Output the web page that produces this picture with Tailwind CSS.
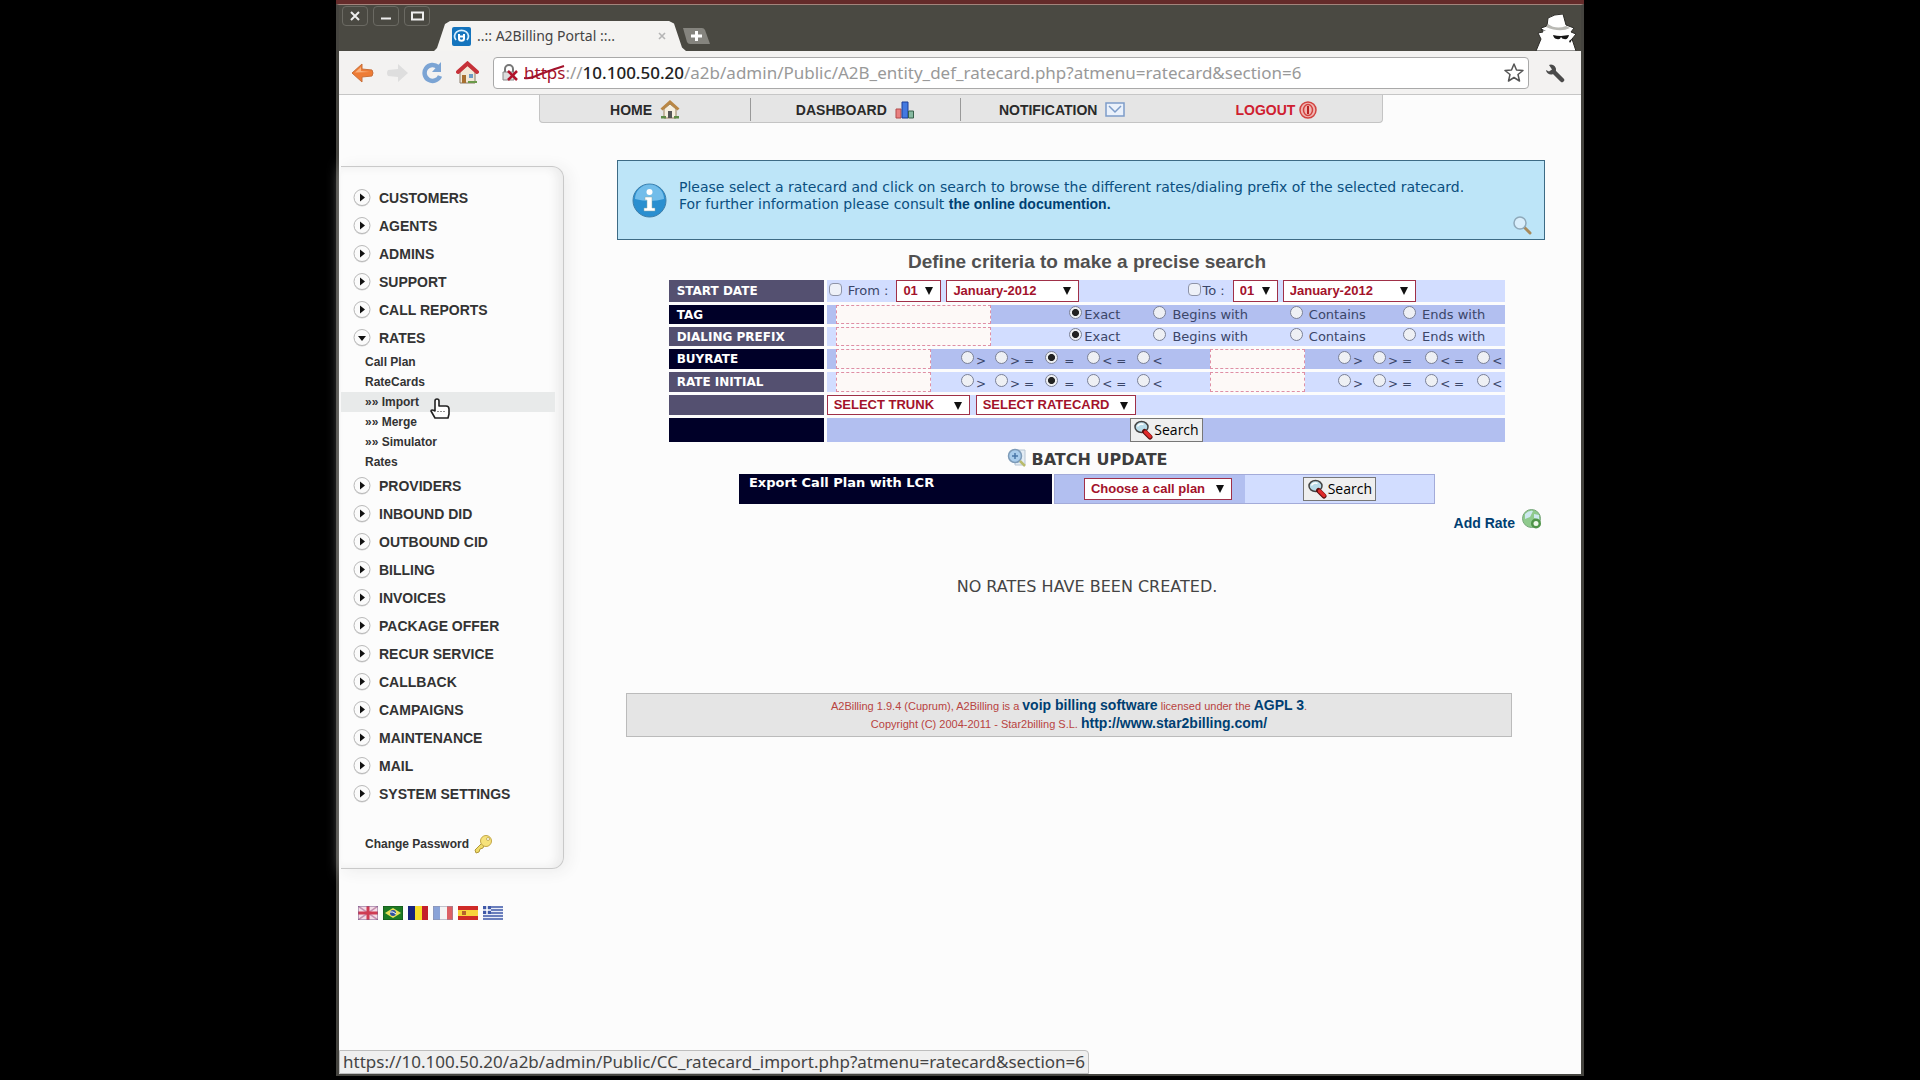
<!DOCTYPE html>
<html lang="en">
  <head>
    <meta charset="UTF-8" />
    <meta name="viewport" content="width=device-width, initial-scale=1" />
    <title>..:: A2Billing Portal ::..</title>
    <script src="https://cdn.jsdelivr.net/npm/@tailwindcss/browser@4"></script>
  </head>
  <body class="bg-black">
    <!-- Shared icons -->
    <svg class="hidden">
      <symbol id="arrow-right" viewBox="0 0 18 18">
        <circle cx="9" cy="9.500" r="8" fill="#d2d2d2" />
        <circle cx="9" cy="8.500" r="8" fill="#fbfbfb" stroke="#b9b9b9" stroke-width="1" />
        <path d="M7 4.500 12 8.500 7 12.500z" fill="#111" />
      </symbol>
      <symbol id="arrow-down" viewBox="0 0 18 18">
        <circle cx="9" cy="9.500" r="8" fill="#d2d2d2" />
        <circle cx="9" cy="8.500" r="8" fill="#fbfbfb" stroke="#b9b9b9" stroke-width="1" />
        <path d="M5 7h8l-4 5z" fill="#111" />
      </symbol>
      <symbol id="caret" viewBox="0 0 8 9">
        <path d="M0 1h8L4 9z" fill="#111" />
      </symbol>
      <symbol id="search" viewBox="0 0 20 20">
        <ellipse cx="8.500" cy="7" rx="6.500" ry="5.500" fill="#b9dcea" stroke="#444" stroke-width="1.500" />
        <path d="M4.500 6.500c1-2.500 4-3 6-2" stroke="#fff" stroke-width="1.500" fill="none" />
        <path d="m11.500 11.500 5.500 5.500" stroke="#5a1010" stroke-width="5" stroke-linecap="round" />
        <path d="m12.500 12 4.500 4.500" stroke="#e02a2a" stroke-width="3.500" stroke-linecap="round" />
      </symbol>
    </svg>

    <div
      class="mx-auto flex min-h-screen w-[65%] flex-col border-t-4 border-[#642b2a] pb-1 font-['Liberation_Sans',sans-serif]"
    >
      <div class="flex grow flex-col border-x-[3px] border-t border-b-2 border-x-[#45443f] border-t-[#a3847c] border-b-[#45443f]">
        <!-- Title bar -->
        <header class="flex h-[46px] items-end justify-between bg-[#4a4942] pr-1">
          <div class="flex h-full items-start">
            <div class="flex gap-[5px] pt-px pr-1 pl-[3px]">
              <button aria-label="Close" class="flex h-5 w-[26px] items-center justify-center rounded-sm border border-[#6b6a63]">
                <svg class="size-3" viewBox="0 0 12 12"><path d="m2 2 8 8M10 2 2 10" stroke="#eee" stroke-width="2" /></svg>
              </button>
              <button aria-label="Minimize" class="flex h-5 w-[26px] items-center justify-center rounded-sm border border-[#6b6a63]">
                <svg class="size-3" viewBox="0 0 12 12"><path d="M1 8.500h10" stroke="#eee" stroke-width="2" /></svg>
              </button>
              <button aria-label="Maximize" class="flex h-5 w-[26px] items-center justify-center rounded-sm border border-[#6b6a63]">
                <svg class="h-[10px] w-[13px]" viewBox="0 0 13 10"><path d="M1 1.500h11v7H1z" fill="none" stroke="#eee" stroke-width="2" /></svg>
              </button>
            </div>
            <div
              class="mt-4 flex h-[30px] w-[252px] items-center bg-[#f4f3f1] pl-[18px] font-['Noto_Sans',sans-serif] text-sm text-[#444] [clip-path:polygon(0_100%,3px_90%,11px_10%,16px_0,235px_0,240px_8%,248px_88%,100%_100%)]"
            >
              <svg class="mr-[6px] size-[19px]" viewBox="0 0 19 19">
                <rect width="19" height="19" rx="2" fill="#1474bd" />
                <path d="M4 13a7 6 0 1 1 11 0" fill="none" stroke="#d7efff" stroke-width="1.800" />
                <path d="M7 7v4.500c0 3 5 3 5 0V7M7 9.500h5" fill="none" stroke="#fff" stroke-width="2" />
              </svg>
              <span class="grow">..:: A2Billing Portal ::..</span>
              <button aria-label="Close tab" class="mr-5">
                <svg class="size-2" viewBox="0 0 8 8"><path d="m1 1 6 6M7 1 1 7" stroke="#b5b5b5" stroke-width="1.600" /></svg>
              </button>
            </div>
            <button aria-label="New tab" class="mt-[22px] -ml-1">
              <svg class="h-[18px] w-7" viewBox="0 0 28 18">
                <path d="M1 1h19q2 0 3 2l5 14H8q-2 0-3-2z" fill="#85847e" />
                <path d="M9 9h11M14.500 4v10" stroke="#fff" stroke-width="3" />
              </svg>
            </button>
          </div>
          <svg class="h-[37px] w-[42px]" viewBox="0 0 42 37">
            <path d="M1 37 6 25 3 19l5-1-2-4 6-2 1-8q6-4 15-4l3 11 8 3-3 4 5 2-4 5 4 12z" fill="#fff" stroke="#2d2c28" />
            <path d="M13 10q8 6 18 2l4 2q-10 5-24-1z" fill="#b9b9b4" />
            <path d="M18 21q4 1 8 1l8-1q-1 5-5 4-2 0-3-2-1 3-4 2-3 0-4-4M7 15l4 2-5-1zM34 27l4-3-3 5z" fill="#151515" />
          </svg>
        </header>

        <!-- Toolbar -->
        <div class="flex h-[44px] items-center border-b border-[#c6c6c6] bg-[#f3f2f1] pr-4 pl-3">
          <button aria-label="Back" class="mr-3">
            <svg class="h-5 w-[23px]" viewBox="0 0 23 20">
              <path d="M1 10 11 1v5l10 1q2 3 0 6l-10 1v5z" fill="#ee7c35" stroke="#c9703a" />
              <path d="M4 9.500 10 4v4l9 1z" fill="#f9b27f" />
            </svg>
          </button>
          <button aria-label="Forward" class="mr-3">
            <svg class="h-5 w-[23px]" viewBox="0 0 23 20">
              <path d="M22 10 12 1v5L2 7q-2 3 0 6l10 1v5z" fill="#dedede" />
            </svg>
          </button>
          <button aria-label="Reload" class="mr-3">
            <svg class="h-[22px] w-[23px]" viewBox="0 0 23 22">
              <path d="M17 5a8 8 0 1 0 2 9" fill="none" stroke="#7ba4d4" stroke-width="4.500" />
              <path d="M20 0v10h-9z" fill="#7ba4d4" />
            </svg>
          </button>
          <button aria-label="Home" class="mr-[14px]">
            <svg class="h-6 w-[23px]" viewBox="0 0 23 24">
              <path d="M4 11 11.500 4 19 11v11H4z" fill="#f2e9d8" stroke="#8b7b66" />
              <path d="M2 11 11.500 2.500 21 11" fill="none" stroke="#c63139" stroke-width="4" stroke-linecap="round" />
              <path d="M6 14h4v8H6z" fill="#a8702f" />
              <path d="M13 13h4v4h-4z" fill="#6d9bc4" />
              <path d="M12 20h9v2h-9z" fill="#6a9a4a" />
            </svg>
          </button>
          <div class="flex h-8 grow items-center rounded border border-[#a9a9a9] bg-white pr-1 pl-2">
            <svg class="mr-[6px] h-[18px] w-4" viewBox="0 0 16 18">
              <path d="M3 8V5a4 4 0 0 1 8 0v3" fill="none" stroke="#777" stroke-width="2" />
              <path d="M1 8h11v8H1z" fill="#ddd" stroke="#888" />
              <path d="m6 7 9 9M15 7l-9 9" stroke="#b1122b" stroke-width="2.500" />
            </svg>
            <div class="grow font-['Noto_Sans',sans-serif] text-[17px] leading-6 whitespace-nowrap text-[#999]">
              <span class="relative text-[#a3122b]">https<svg class="absolute top-1 left-0 h-4 w-[42px]" viewBox="0 0 42 16"><path d="M0 13Q6 14 12 11T40 1" fill="none" stroke="#a3122b" stroke-width="2" /></svg></span>://<span class="font-medium text-[#222]">10.100.50.20</span>/a2b/admin/Public/A2B_entity_def_ratecard.php?atmenu=ratecard&amp;section=6
            </div>
            <button aria-label="Bookmark this page">
              <svg class="size-5" viewBox="0 0 20 20"><path d="m10 1 2.500 6 6.500.500-5 4 1.500 6.500-5.500-3.500L4.500 18 6 11.500l-5-4L7.500 7z" fill="#fff" stroke="#555" stroke-width="1.500" stroke-linejoin="round" /></svg>
            </button>
          </div>
          <button aria-label="Settings" class="ml-4">
            <svg class="size-5" viewBox="0 0 20 20">
              <path d="m9 9 8 8" stroke="#4b4b4b" stroke-width="4.500" stroke-linecap="round" />
              <path d="M4 2a5 5 0 1 1-3 5l3 1.500 3-2z" fill="#4b4b4b" />
            </svg>
          </button>
        </div>

        <!-- Page -->
        <div class="relative flex grow flex-col bg-[#fcfcfc] pl-[2px]">
          <nav class="mx-auto grid h-7 w-[68%] grid-cols-4 rounded-b-sm border border-t-0 border-[#c4c4c4] bg-[#e5e5e5] pt-[3px] pb-px text-sm font-bold text-[#2a2a2a]">
            <a href="#" class="flex items-center justify-center gap-2 border-r border-[#999]">HOME
              <svg class="size-5" viewBox="0 0 20 20">
                <path d="M4 9 10 4l6 5v9H4z" fill="#f6efdf" stroke="#9b8360" />
                <path d="M1.500 9.500 10 2l8.500 7.500" fill="none" stroke="#b98644" stroke-width="3" />
                <path d="M8 11h4v7H8z" fill="#555" />
                <path d="M1 16h5v2.500H1zM14 16h5v2.500h-5z" fill="#5d8a45" />
              </svg>
            </a>
            <a href="#" class="flex items-center justify-center gap-2 border-r border-[#999]">DASHBOARD
              <svg class="size-5" viewBox="0 0 20 20">
                <path d="M1 9h5v9H1z" fill="#e88080" stroke="#b14a4a" />
                <path d="M7 2h6v16H7z" fill="#4379e0" stroke="#1c3f99" />
                <path d="M13.500 11h5v7h-5z" fill="#86b9a0" stroke="#37604a" />
              </svg>
            </a>
            <a href="#" class="flex items-center justify-center gap-2 pr-2">NOTIFICATION
              <svg class="h-4 w-5" viewBox="0 0 20 16">
                <path d="M1 1h18v13H1z" fill="#eaf1fb" stroke="#7d9cc9" stroke-width="1.500" />
                <path d="m4 4 6 6 6-6" fill="none" stroke="#7d9cc9" stroke-width="1.500" />
              </svg>
            </a>
            <a href="#" class="flex items-center justify-center gap-1 text-[#cf2030]">LOGOUT
              <svg class="size-[18px]" viewBox="0 0 18 18">
                <circle cx="9" cy="9" r="8" fill="#f0b6b2" stroke="#d2423f" stroke-width="1.500" />
                <ellipse cx="9" cy="9" rx="4.500" ry="5.500" fill="none" stroke="#d2423f" stroke-width="1.500" />
                <path d="M9 5v8" stroke="#b92222" stroke-width="2" />
              </svg>
            </a>
          </nav>

          <div class="flex grow">
            <!-- Side menu -->
            <aside class="w-[223px] shrink-0 pt-[43px]">
              <div class="relative h-[703px] rounded-r-xl border border-l-0 border-[#c9c9c9] pt-[17px] text-[#333] shadow-[inset_-6px_0_10px_#ececec,4px_2px_16px_#ececec]">
                <ul class="text-sm font-bold">
                  <li><a href="#" class="flex h-7 items-center gap-2 pl-3"><svg class="size-[18px]"><use href="#arrow-right" /></svg>CUSTOMERS</a></li>
                  <li><a href="#" class="flex h-7 items-center gap-2 pl-3"><svg class="size-[18px]"><use href="#arrow-right" /></svg>AGENTS</a></li>
                  <li><a href="#" class="flex h-7 items-center gap-2 pl-3"><svg class="size-[18px]"><use href="#arrow-right" /></svg>ADMINS</a></li>
                  <li><a href="#" class="flex h-7 items-center gap-2 pl-3"><svg class="size-[18px]"><use href="#arrow-right" /></svg>SUPPORT</a></li>
                  <li><a href="#" class="flex h-7 items-center gap-2 pl-3"><svg class="size-[18px]"><use href="#arrow-right" /></svg>CALL REPORTS</a></li>
                  <li>
                    <a href="#" class="flex h-7 items-center gap-2 pl-3"><svg class="size-[18px]"><use href="#arrow-down" /></svg>RATES</a>
                    <ul class="text-xs leading-5">
                      <li><a href="#" class="block pl-6">Call Plan</a></li>
                      <li><a href="#" class="block pl-6">RateCards</a></li>
                      <li class="relative mr-2 bg-[#e8eaea]">
                        <a href="#" class="block pl-6">»» Import</a>
                        <!-- Mouse pointer -->
                        <svg class="absolute top-[6px] left-[89px] h-[21px] w-5" viewBox="0 0 20 21">
                          <path d="M5 12V3q0-2 2-2t2 2v5h7q3 0 3 3v5l-1 4H5l-4-7q0-2 4 0z" fill="#fff" stroke="#222" stroke-width="1.600" stroke-linejoin="round" />
                          <path d="M8 13v1M11 13v1M14 13v1" stroke="#222" />
                        </svg>
                      </li>
                      <li><a href="#" class="block pl-6">»» Merge</a></li>
                      <li><a href="#" class="block pl-6">»» Simulator</a></li>
                      <li><a href="#" class="block pl-6">Rates</a></li>
                    </ul>
                  </li>
                  <li><a href="#" class="flex h-7 items-center gap-2 pl-3"><svg class="size-[18px]"><use href="#arrow-right" /></svg>PROVIDERS</a></li>
                  <li><a href="#" class="flex h-7 items-center gap-2 pl-3"><svg class="size-[18px]"><use href="#arrow-right" /></svg>INBOUND DID</a></li>
                  <li><a href="#" class="flex h-7 items-center gap-2 pl-3"><svg class="size-[18px]"><use href="#arrow-right" /></svg>OUTBOUND CID</a></li>
                  <li><a href="#" class="flex h-7 items-center gap-2 pl-3"><svg class="size-[18px]"><use href="#arrow-right" /></svg>BILLING</a></li>
                  <li><a href="#" class="flex h-7 items-center gap-2 pl-3"><svg class="size-[18px]"><use href="#arrow-right" /></svg>INVOICES</a></li>
                  <li><a href="#" class="flex h-7 items-center gap-2 pl-3"><svg class="size-[18px]"><use href="#arrow-right" /></svg>PACKAGE OFFER</a></li>
                  <li><a href="#" class="flex h-7 items-center gap-2 pl-3"><svg class="size-[18px]"><use href="#arrow-right" /></svg>RECUR SERVICE</a></li>
                  <li><a href="#" class="flex h-7 items-center gap-2 pl-3"><svg class="size-[18px]"><use href="#arrow-right" /></svg>CALLBACK</a></li>
                  <li><a href="#" class="flex h-7 items-center gap-2 pl-3"><svg class="size-[18px]"><use href="#arrow-right" /></svg>CAMPAIGNS</a></li>
                  <li><a href="#" class="flex h-7 items-center gap-2 pl-3"><svg class="size-[18px]"><use href="#arrow-right" /></svg>MAINTENANCE</a></li>
                  <li><a href="#" class="flex h-7 items-center gap-2 pl-3"><svg class="size-[18px]"><use href="#arrow-right" /></svg>MAIL</a></li>
                  <li><a href="#" class="flex h-7 items-center gap-2 pl-3"><svg class="size-[18px]"><use href="#arrow-right" /></svg>SYSTEM SETTINGS</a></li>
                </ul>
                <a href="#" class="mt-[26px] flex items-center gap-1 pl-6 text-xs font-bold">Change Password
                  <svg class="size-5" viewBox="0 0 20 20">
                    <path d="M9 9 2 16l1 3 3-1 1-3 3-1 1-3z" fill="#f0dc6a" stroke="#b2983a" />
                    <circle cx="13" cy="7" r="5.500" fill="#f6e27a" stroke="#c3a748" />
                    <circle cx="15" cy="5" r="1.500" fill="#fff" stroke="#b2983a" stroke-width=".7" />
                  </svg>
                </a>
              </div>

              <!-- Languages -->
              <div class="mt-[37px] flex gap-[5px] pl-[17px]">
                <a href="#" aria-label="English"><svg class="h-[14px] w-5" viewBox="0 0 20 14"><path fill="#f3dbe5" d="M0 0h20v14H0z" /><path d="m0 0 20 14M20 0 0 14" stroke="#c58fae" stroke-width="1.500" /><path d="M10 0v14M0 7h20" stroke="#cf3b52" stroke-width="3" /><path d="M0 0h20v14H0z" fill="none" stroke="#7b5a8c" /></svg></a>
                <a href="#" aria-label="Portuguese"><svg class="h-[14px] w-5" viewBox="0 0 20 14"><path fill="#1d7a24" d="M0 0h20v14H0z" /><path d="m10 2 8 5-8 5-8-5z" fill="#e8e05a" /><circle cx="10" cy="7" r="3" fill="#2d4fa0" /><path d="M7 6q3-1 6 2" stroke="#fff" fill="none" /><path d="M0 0h20v14H0z" fill="none" stroke="#134c18" /></svg></a>
                <a href="#" aria-label="Romanian"><svg class="h-[14px] w-5" viewBox="0 0 20 14"><path fill="#17237d" d="M0 0h7v14H0z" /><path fill="#f7dc2a" d="M7 0h7v14H7z" /><path fill="#c41f2c" d="M14 0h6v14h-6z" /></svg></a>
                <a href="#" aria-label="French"><svg class="h-[14px] w-5" viewBox="0 0 20 14"><path fill="#8aa3d8" d="M0 0h7v14H0z" /><path fill="#f4f4f4" d="M7 0h7v14H7z" /><path fill="#dc6064" d="M14 0h6v14h-6z" /><path d="M0 0h20v14H0z" fill="none" stroke="#8d8fa5" /></svg></a>
                <a href="#" aria-label="Spanish"><svg class="h-[14px] w-5" viewBox="0 0 20 14"><path fill="#cf2a27" d="M0 0h20v14H0z" /><path fill="#f8d43c" d="M0 4h20v6H0z" /><path fill="#b5622b" d="M4 5h4v4H4z" /></svg></a>
                <a href="#" aria-label="Greek"><svg class="h-[14px] w-5" viewBox="0 0 20 14"><path fill="#e9edf8" d="M0 0h20v14H0z" /><path d="M0 1h20M8 4h12M8 7h12M0 10h20M0 13h20" stroke="#4059a8" stroke-width="1.500" /><path fill="#4059a8" d="M0 0h8v8H0z" /><path d="M4 0v8M0 4h8" stroke="#fff" stroke-width="1.500" /></svg></a>
              </div>
            </aside>

            <main class="grow pt-[37px] pr-9 pl-[53px]">
              <section class="relative flex h-20 items-center border border-[#3d6b85] bg-[#bde5f8] pl-[14px] font-['DejaVu_Sans',sans-serif] text-sm leading-[17px] text-[#0a4f80]">
                <svg class="mr-3 size-[35px] shrink-0" viewBox="0 0 35 35">
                  <circle cx="17.500" cy="17.500" r="16.500" fill="#2a8fd0" stroke="#3f7ea8" />
                  <path d="M3 16a14.500 14.500 0 0 1 29 0q-14 4-29 0" fill="#72bdea" />
                  <circle cx="17.500" cy="9" r="3" fill="#fff" />
                  <path d="M13 14h7v11h3v3H12v-3h3v-8h-2z" fill="#fff" stroke="#8aa" stroke-width=".5" />
                </svg>
                <p class="mb-2">
                  Please select a ratecard and click on search to browse the different rates/dialing prefix of the selected ratecard.<br />
                  For further information please consult <a href="#" class="font-['Liberation_Sans',sans-serif] text-sm leading-4 font-bold text-[#003f72]">the online documention.</a>
                </p>
                <svg class="absolute right-3 bottom-1 size-5" viewBox="0 0 20 20">
                  <path d="m12 12 6 6" stroke="#a88a5b" stroke-width="3" stroke-linecap="round" />
                  <circle cx="8" cy="8" r="6" fill="#d9eefb" stroke="#8fa9ba" stroke-width="1.500" />
                </svg>
              </section>

              <div class="pl-3">
                <h2 class="mt-[10px] mb-[3px] text-center text-[19px] leading-6 font-bold text-[#505050]">Define criteria to make a precise search</h2>

                <form>
                  <table class="mx-auto w-[92%] table-fixed border-separate border-spacing-[3px] font-['DejaVu_Sans',sans-serif] text-[13px] leading-4 text-[#3b4669]">
                    <colgroup><col class="w-[155px]" /><col /></colgroup>
                    <tr>
                      <th class="h-[22px] bg-[#545070] p-0 pl-2 text-left text-xs font-bold text-white">START DATE</th>
                      <td class="bg-[#d2ddff] p-0">
                        <div class="grid h-[22px] grid-cols-[360fr_317fr]">
                          <div class="flex items-center gap-[5px] pl-[2px]">
                            <label class="mr-[3px] flex items-center gap-[6px]"><input type="checkbox" class="mb-1 size-[13px] appearance-none rounded-sm border border-[#8d93a8] bg-[#eef1f8] checked:bg-[#445]" />From :</label>
                            <div class="relative"><select aria-label="From day" class="h-[22px] w-[45px] appearance-none border border-[#a03048] bg-white pl-[6px] font-['Liberation_Sans',sans-serif] text-[13px] font-bold text-[#a3122b]"><option>01</option></select><svg class="pointer-events-none absolute top-[6px] right-2 h-[9px] w-2"><use href="#caret" /></svg></div>
                            <div class="relative"><select aria-label="From month" class="h-[22px] w-[133px] appearance-none border border-[#a03048] bg-white pl-[6px] font-['Liberation_Sans',sans-serif] text-[13px] font-bold text-[#a3122b]"><option>January-2012</option></select><svg class="pointer-events-none absolute top-[6px] right-2 h-[9px] w-2"><use href="#caret" /></svg></div>
                          </div>
                          <div class="flex items-center gap-[5px]">
                            <label class="mr-[3px] flex items-center gap-[2px]"><input type="checkbox" class="mb-1 size-[13px] appearance-none rounded-sm border border-[#8d93a8] bg-[#eef1f8] checked:bg-[#445]" />To :</label>
                            <div class="relative"><select aria-label="To day" class="h-[22px] w-[45px] appearance-none border border-[#a03048] bg-white pl-[6px] font-['Liberation_Sans',sans-serif] text-[13px] font-bold text-[#a3122b]"><option>01</option></select><svg class="pointer-events-none absolute top-[6px] right-2 h-[9px] w-2"><use href="#caret" /></svg></div>
                            <div class="relative"><select aria-label="To month" class="h-[22px] w-[133px] appearance-none border border-[#a03048] bg-white pl-[6px] font-['Liberation_Sans',sans-serif] text-[13px] font-bold text-[#a3122b]"><option>January-2012</option></select><svg class="pointer-events-none absolute top-[6px] right-2 h-[9px] w-2"><use href="#caret" /></svg></div>
                          </div>
                        </div>
                      </td>
                    </tr>
                    <tr>
                      <th class="h-[19px] bg-[#000028] p-0 pl-2 text-left text-xs font-bold text-white"><label for="tag">TAG</label></th>
                      <td class="bg-[#b2bff0] p-0">
                        <div class="grid h-[19px] grid-cols-[242fr_84fr_136fr_113fr_102fr] items-center">
                          <div class="pl-[9px]"><input id="tag" type="text" class="block h-[19px] w-[155px] border border-dashed border-[#df8fa5] bg-[#fdf9f7] px-1" /></div>
                          <label class="flex items-end gap-[2px]"><input type="radio" name="tag-type" checked class="mb-1 size-[13px] appearance-none rounded-full border border-[#7a8096] bg-[#eef0f4] checked:bg-[radial-gradient(circle,#222_40%,#eef0f4_50%)]" />Exact</label>
                          <label class="flex items-end gap-[6px]"><input type="radio" name="tag-type" class="mb-1 size-[13px] appearance-none rounded-full border border-[#7a8096] bg-[#eef0f4] checked:bg-[radial-gradient(circle,#222_40%,#eef0f4_50%)]" />Begins with</label>
                          <label class="flex items-end gap-[6px]"><input type="radio" name="tag-type" class="mb-1 size-[13px] appearance-none rounded-full border border-[#7a8096] bg-[#eef0f4] checked:bg-[radial-gradient(circle,#222_40%,#eef0f4_50%)]" />Contains</label>
                          <label class="flex items-end gap-[6px]"><input type="radio" name="tag-type" class="mb-1 size-[13px] appearance-none rounded-full border border-[#7a8096] bg-[#eef0f4] checked:bg-[radial-gradient(circle,#222_40%,#eef0f4_50%)]" />Ends with</label>
                        </div>
                      </td>
                    </tr>
                    <tr>
                      <th class="h-[19px] bg-[#545070] p-0 pl-2 text-left text-xs font-bold text-white"><label for="prefix">DIALING PREFIX</label></th>
                      <td class="bg-[#d2ddff] p-0">
                        <div class="grid h-[19px] grid-cols-[242fr_84fr_136fr_113fr_102fr] items-center">
                          <div class="pl-[9px]"><input id="prefix" type="text" class="block h-[19px] w-[155px] border border-dashed border-[#df8fa5] bg-[#fdf9f7] px-1" /></div>
                          <label class="flex items-end gap-[2px]"><input type="radio" name="prefix-type" checked class="mb-1 size-[13px] appearance-none rounded-full border border-[#7a8096] bg-[#eef0f4] checked:bg-[radial-gradient(circle,#222_40%,#eef0f4_50%)]" />Exact</label>
                          <label class="flex items-end gap-[6px]"><input type="radio" name="prefix-type" class="mb-1 size-[13px] appearance-none rounded-full border border-[#7a8096] bg-[#eef0f4] checked:bg-[radial-gradient(circle,#222_40%,#eef0f4_50%)]" />Begins with</label>
                          <label class="flex items-end gap-[6px]"><input type="radio" name="prefix-type" class="mb-1 size-[13px] appearance-none rounded-full border border-[#7a8096] bg-[#eef0f4] checked:bg-[radial-gradient(circle,#222_40%,#eef0f4_50%)]" />Contains</label>
                          <label class="flex items-end gap-[6px]"><input type="radio" name="prefix-type" class="mb-1 size-[13px] appearance-none rounded-full border border-[#7a8096] bg-[#eef0f4] checked:bg-[radial-gradient(circle,#222_40%,#eef0f4_50%)]" />Ends with</label>
                        </div>
                      </td>
                    </tr>
                    <tr>
                      <th class="h-5 bg-[#000028] p-0 pl-2 text-left text-xs font-bold text-white"><label for="buyrate">BUYRATE</label></th>
                      <td class="bg-[#b2bff0] p-0">
                        <div class="grid h-5 grid-cols-[134fr_34fr_50fr_42fr_50fr_72fr_128fr_35fr_52fr_52fr_28fr] items-center text-xs leading-[14px] whitespace-nowrap">
                          <div class="pl-[9px]"><input id="buyrate" type="text" class="block h-5 w-[95px] border border-dashed border-[#df8fa5] bg-[#fdf9f7] px-1" /></div>
                          <label class="flex items-end gap-[2px]"><input type="radio" name="buy1" class="mb-1 size-[13px] appearance-none rounded-full border border-[#7a8096] bg-[#eef0f4] checked:bg-[radial-gradient(circle,#222_40%,#eef0f4_50%)]" />&gt;</label>
                          <label class="flex items-end gap-[2px]"><input type="radio" name="buy1" class="mb-1 size-[13px] appearance-none rounded-full border border-[#7a8096] bg-[#eef0f4] checked:bg-[radial-gradient(circle,#222_40%,#eef0f4_50%)]" />&gt; =</label>
                          <label class="flex items-end gap-[6px]"><input type="radio" name="buy1" checked class="mb-1 size-[13px] appearance-none rounded-full border border-[#7a8096] bg-[#eef0f4] checked:bg-[radial-gradient(circle,#222_40%,#eef0f4_50%)]" />=</label>
                          <label class="flex items-end gap-[2px]"><input type="radio" name="buy1" class="mb-1 size-[13px] appearance-none rounded-full border border-[#7a8096] bg-[#eef0f4] checked:bg-[radial-gradient(circle,#222_40%,#eef0f4_50%)]" />&lt; =</label>
                          <label class="flex items-end gap-[2px]"><input type="radio" name="buy1" class="mb-1 size-[13px] appearance-none rounded-full border border-[#7a8096] bg-[#eef0f4] checked:bg-[radial-gradient(circle,#222_40%,#eef0f4_50%)]" />&lt;</label>
                          <input type="text" aria-label="Buyrate upper value" class="block h-5 w-[95px] border border-dashed border-[#df8fa5] bg-[#fdf9f7] px-1" />
                          <label class="flex items-end gap-[2px]"><input type="radio" name="buy2" class="mb-1 size-[13px] appearance-none rounded-full border border-[#7a8096] bg-[#eef0f4] checked:bg-[radial-gradient(circle,#222_40%,#eef0f4_50%)]" />&gt;</label>
                          <label class="flex items-end gap-[2px]"><input type="radio" name="buy2" class="mb-1 size-[13px] appearance-none rounded-full border border-[#7a8096] bg-[#eef0f4] checked:bg-[radial-gradient(circle,#222_40%,#eef0f4_50%)]" />&gt; =</label>
                          <label class="flex items-end gap-[2px]"><input type="radio" name="buy2" class="mb-1 size-[13px] appearance-none rounded-full border border-[#7a8096] bg-[#eef0f4] checked:bg-[radial-gradient(circle,#222_40%,#eef0f4_50%)]" />&lt; =</label>
                          <label class="flex items-end gap-[2px]"><input type="radio" name="buy2" class="mb-1 size-[13px] appearance-none rounded-full border border-[#7a8096] bg-[#eef0f4] checked:bg-[radial-gradient(circle,#222_40%,#eef0f4_50%)]" />&lt;</label>
                        </div>
                      </td>
                    </tr>
                    <tr>
                      <th class="h-5 bg-[#545070] p-0 pl-2 text-left text-xs font-bold text-white"><label for="rateinitial">RATE INITIAL</label></th>
                      <td class="bg-[#d2ddff] p-0">
                        <div class="grid h-5 grid-cols-[134fr_34fr_50fr_42fr_50fr_72fr_128fr_35fr_52fr_52fr_28fr] items-center text-xs leading-[14px] whitespace-nowrap">
                          <div class="pl-[9px]"><input id="rateinitial" type="text" class="block h-5 w-[95px] border border-dashed border-[#df8fa5] bg-[#fdf9f7] px-1" /></div>
                          <label class="flex items-end gap-[2px]"><input type="radio" name="init1" class="mb-1 size-[13px] appearance-none rounded-full border border-[#7a8096] bg-[#eef0f4] checked:bg-[radial-gradient(circle,#222_40%,#eef0f4_50%)]" />&gt;</label>
                          <label class="flex items-end gap-[2px]"><input type="radio" name="init1" class="mb-1 size-[13px] appearance-none rounded-full border border-[#7a8096] bg-[#eef0f4] checked:bg-[radial-gradient(circle,#222_40%,#eef0f4_50%)]" />&gt; =</label>
                          <label class="flex items-end gap-[6px]"><input type="radio" name="init1" checked class="mb-1 size-[13px] appearance-none rounded-full border border-[#7a8096] bg-[#eef0f4] checked:bg-[radial-gradient(circle,#222_40%,#eef0f4_50%)]" />=</label>
                          <label class="flex items-end gap-[2px]"><input type="radio" name="init1" class="mb-1 size-[13px] appearance-none rounded-full border border-[#7a8096] bg-[#eef0f4] checked:bg-[radial-gradient(circle,#222_40%,#eef0f4_50%)]" />&lt; =</label>
                          <label class="flex items-end gap-[2px]"><input type="radio" name="init1" class="mb-1 size-[13px] appearance-none rounded-full border border-[#7a8096] bg-[#eef0f4] checked:bg-[radial-gradient(circle,#222_40%,#eef0f4_50%)]" />&lt;</label>
                          <input type="text" aria-label="Rate initial upper value" class="block h-5 w-[95px] border border-dashed border-[#df8fa5] bg-[#fdf9f7] px-1" />
                          <label class="flex items-end gap-[2px]"><input type="radio" name="init2" class="mb-1 size-[13px] appearance-none rounded-full border border-[#7a8096] bg-[#eef0f4] checked:bg-[radial-gradient(circle,#222_40%,#eef0f4_50%)]" />&gt;</label>
                          <label class="flex items-end gap-[2px]"><input type="radio" name="init2" class="mb-1 size-[13px] appearance-none rounded-full border border-[#7a8096] bg-[#eef0f4] checked:bg-[radial-gradient(circle,#222_40%,#eef0f4_50%)]" />&gt; =</label>
                          <label class="flex items-end gap-[2px]"><input type="radio" name="init2" class="mb-1 size-[13px] appearance-none rounded-full border border-[#7a8096] bg-[#eef0f4] checked:bg-[radial-gradient(circle,#222_40%,#eef0f4_50%)]" />&lt; =</label>
                          <label class="flex items-end gap-[2px]"><input type="radio" name="init2" class="mb-1 size-[13px] appearance-none rounded-full border border-[#7a8096] bg-[#eef0f4] checked:bg-[radial-gradient(circle,#222_40%,#eef0f4_50%)]" />&lt;</label>
                        </div>
                      </td>
                    </tr>
                    <tr>
                      <th class="h-5 bg-[#545070] p-0"></th>
                      <td class="bg-[#d2ddff] p-0">
                        <div class="flex gap-[6px]">
                          <div class="relative"><select aria-label="Trunk" class="block h-5 w-[143px] appearance-none border border-[#a03048] bg-white pl-[6px] font-['Liberation_Sans',sans-serif] text-[13px] font-bold text-[#a3122b]"><option>SELECT TRUNK</option></select><svg class="pointer-events-none absolute top-[6px] right-2 h-[9px] w-2"><use href="#caret" /></svg></div>
                          <div class="relative"><select aria-label="Ratecard" class="block h-5 w-[160px] appearance-none border border-[#a03048] bg-white pl-[6px] font-['Liberation_Sans',sans-serif] text-[13px] font-bold text-[#a3122b]"><option>SELECT RATECARD</option></select><svg class="pointer-events-none absolute top-[6px] right-2 h-[9px] w-2"><use href="#caret" /></svg></div>
                        </div>
                      </td>
                    </tr>
                    <tr>
                      <th class="h-6 bg-[#000028] p-0"></th>
                      <td class="bg-[#b2bff0] p-0">
                        <button type="button" class="mx-auto flex h-6 w-[73px] items-center justify-center gap-px border border-[#777] bg-[#efefef] font-['Open_Sans',sans-serif] text-sm text-black"><svg class="size-5"><use href="#search" /></svg>Search</button>
                      </td>
                    </tr>
                  </table>
                </form>

                <h3 class="flex h-[29px] items-center justify-center gap-[5px] pt-px font-['DejaVu_Sans',sans-serif] text-base font-bold text-[#3d3d3d]">
                  <svg class="mb-1 size-5" viewBox="0 0 20 20">
                    <path d="M8 2h10v15H8z" fill="#e3ecf4" stroke="#b6c4d2" />
                    <circle cx="8" cy="8" r="6.500" fill="#a9cdec" stroke="#7d9bb8" stroke-width="1.500" />
                    <path d="M5 8h6M8 5v6" stroke="#4a78a8" stroke-width="1.500" />
                    <path d="m13 13 5 5" stroke="#b9bb6b" stroke-width="2.500" />
                  </svg>
                  BATCH UPDATE
                </h3>

                <form class="mx-auto flex h-[30px] w-[76%] gap-[2px]">
                  <label for="callplan" class="w-[45%] bg-[#000028] pl-[10px] font-['DejaVu_Sans',sans-serif] text-[13px] leading-[18px] font-bold text-white">Export Call Plan with LCR</label>
                  <div class="flex grow border border-[#a3abd9] bg-[#b2bff0]">
                    <div class="flex grow items-center justify-center pl-4">
                      <div class="relative"><select id="callplan" class="block h-[22px] w-[148px] appearance-none border border-[#a03048] bg-white pl-[6px] font-['Liberation_Sans',sans-serif] text-[13px] font-bold text-[#a3122b]"><option>Choose a call plan</option></select><svg class="pointer-events-none absolute top-[6px] right-2 h-[9px] w-2"><use href="#caret" /></svg></div>
                    </div>
                    <div class="flex w-1/2 items-center justify-center bg-[#d2ddff]">
                      <button type="button" class="flex h-6 w-[73px] items-center justify-center gap-px border border-[#777] bg-[#efefef] font-['Open_Sans',sans-serif] text-sm text-black"><svg class="size-5"><use href="#search" /></svg>Search</button>
                    </div>
                  </div>
                </form>
              </div>

              <div class="mt-[5px] flex justify-end pr-[3px]">
                <a href="#" class="flex items-center gap-[7px] text-sm leading-7 font-bold text-[#003f72]">Add Rate
                  <svg class="mb-2 size-5" viewBox="0 0 20 20">
                    <circle cx="9.500" cy="9.500" r="9" fill="#8fca8d" stroke="#77a77a" />
                    <path d="M3 5q4-4 8-3L8 8l-5 2zM12 5l5 1v5l-5-2z" fill="#cde8ef" />
                    <circle cx="14" cy="14.500" r="5" fill="#4f9448" />
                    <circle cx="14" cy="14.500" r="2.500" fill="#eef8ea" />
                  </svg>
                </a>
              </div>

              <p class="mt-[38px] pl-3 text-center font-['DejaVu_Sans',sans-serif] text-base text-[#444]">NO RATES HAVE BEEN CREATED.</p>

              <footer class="mt-[94px] pr-6">
                <div class="mx-auto w-[98%] border border-[#bbb] bg-[#e5e5e5] py-[3px] text-center text-[11px] leading-[18px] text-[#b8433f]">
                  A2Billing 1.9.4 (Cuprum), A2Billing is a <a href="#" class="text-sm leading-4 font-bold text-[#003f72]">voip billing software</a> licensed under the <a href="#" class="text-sm leading-4 font-bold text-[#003f72]">AGPL 3</a>.<br />
                  Copyright (C) 2004-2011 - Star2billing S.L. <a href="#" class="text-sm leading-4 font-bold text-[#003f72]">http://www.star2billing.com/</a>
                </div>
              </footer>
            </main>
          </div>

          <!-- Status bubble -->
          <div class="absolute bottom-0 left-0 rounded-tr border border-[#bdbdbd] bg-[#efefef] px-[3px] font-['Noto_Sans',sans-serif] text-[17px] leading-[22px] text-[#444]">
            https://10.100.50.20/a2b/admin/Public/CC_ratecard_import.php?atmenu=ratecard&amp;section=6
          </div>
        </div>
      </div>
    </div>
  </body>
</html>
